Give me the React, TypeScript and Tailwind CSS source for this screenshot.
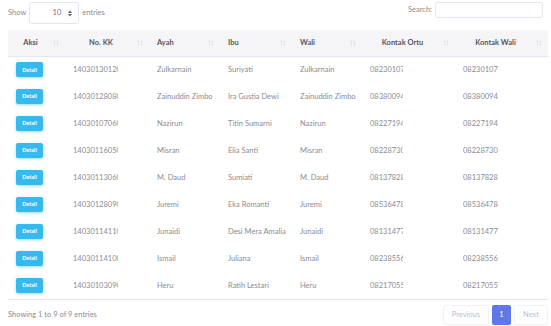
import React from "react";

const rows = [
  ["14030130120045", "Zulkarnain", "Suriyati", "Zulkarnain", "082301071234", "082301071234"],
  ["14030128080012", "Zainuddin Zimbo", "Ira Gustia Dewi", "Zainuddin Zimbo", "083800945512", "083800945512"],
  ["14030107060033", "Nazirun", "Titin Sumarni", "Nazirun", "082271943321", "082271943321"],
  ["14030116050021", "Misran", "Elia Santi", "Misran", "082287306654", "082287306654"],
  ["14030113060018", "M. Daud", "Sumiati", "M. Daud", "081378281123", "081378281123"],
  ["14030128090027", "Juremi", "Eka Romanti", "Juremi", "085364788876", "085364788876"],
  ["14030114110009", "Junaidi", "Desi Mera Amalia", "Junaidi", "081314772231", "081314772231"],
  ["14030114100014", "Ismail", "Juliana", "Ismail", "082385565544", "082385565544"],
  ["14030103090031", "Heru", "Ratih Lestari", "Heru", "082170557789", "082170557789"],
];

const headers: { label: string; center: boolean }[] = [
  { label: "Aksi", center: true },
  { label: "No. KK", center: true },
  { label: "Ayah", center: false },
  { label: "Ibu", center: false },
  { label: "Wali", center: false },
  { label: "Kontak Ortu", center: true },
  { label: "Kontak Wali", center: true },
];

function SortIcon() {
  return (
    <svg width="6" height="6" viewBox="0 0 6 6" className="absolute right-[6px] top-1/2 -translate-y-1/2">
      <path d="M1.5 5.5V0.8M0.5 1.8L1.5 0.8L2.5 1.8" stroke="#d5d7e0" strokeWidth="0.6" fill="none" />
      <path d="M4.5 0.5V5.2M3.5 4.2L4.5 5.2L5.5 4.2" stroke="#d5d7e0" strokeWidth="0.6" fill="none" />
    </svg>
  );
}

export default function App() {
  return (
    <div
      className="w-[551px] h-[326px] bg-white text-[#8a8b93] text-[7.5px] overflow-hidden"
      style={{ fontFamily: "Lato, 'Open Sans', sans-serif" }}
    >
      <div className="flex items-start justify-between px-[8px] pt-[2px] h-[30px]">
        <div className="flex items-center gap-[3px] h-[22px]">
          <span>Show</span>
          <div className="w-[50px] h-[22px] border border-[#e3e6f0] rounded-[3px] flex items-center justify-end pr-[6px] gap-[7px] text-[#6e707e]">
            <span>10</span>
            <svg width="4" height="7" viewBox="0 0 4 7">
              <path d="M0 3L2 0.5L4 3Z M0 4L2 6.5L4 4Z" fill="#5a5c69" />
            </svg>
          </div>
          <span>entries</span>
        </div>
        <div className="flex items-center gap-[3px] h-[16px]">
          <span>Search:</span>
          <div className="w-[108px] h-[16px] border border-[#e3e6f0] rounded-[3px]" />
        </div>
      </div>
      <div className="px-[8px]">
        <table className="table-fixed w-[540px] border-collapse">
          <colgroup>
            <col className="w-[57px]" />
            <col className="w-[84px]" />
            <col className="w-[71px]" />
            <col className="w-[72px]" />
            <col className="w-[70px]" />
            <col className="w-[93px]" />
            <col className="w-[93px]" />
          </colgroup>
          <thead>
            <tr className="bg-[#f5f5f7] h-[26px] border-b border-[#e3e6f0]">
              {headers.map((h) => (
                <th
                  key={h.label}
                  className={`relative font-bold text-[#55565f] pl-[8px] pr-[20px] ${h.center ? "text-center" : "text-left"}`}
                >
                  {h.label}
                  <SortIcon />
                </th>
              ))}
            </tr>
          </thead>
          <tbody>
            {rows.map((r, i) => (
              <tr key={i} className={`h-[27px] ${i === rows.length - 1 ? "border-b border-[#e3e6f0]" : ""}`}>
                <td className="pl-[8px]">
                  <span className="inline-flex items-center justify-center w-[27px] h-[15px] rounded-[2px] bg-[#36b9ee] text-white text-[5.5px] font-bold shadow-[0_1px_3px_rgba(54,185,238,0.5)]">
                    Detail
                  </span>
                </td>
                <td className="pl-[8px] align-middle">
                  <div className="w-[45px] overflow-hidden whitespace-nowrap">{r[0]}</div>
                </td>
                <td className="pl-[8px] whitespace-nowrap">{r[1]}</td>
                <td className="pl-[8px] whitespace-nowrap">{r[2]}</td>
                <td className="pl-[8px] whitespace-nowrap">{r[3]}</td>
                <td className="pl-[8px]">
                  <div className="w-[33px] overflow-hidden whitespace-nowrap">{r[4]}</div>
                </td>
                <td className="pl-[8px]">
                  <div className="w-[35px] overflow-hidden whitespace-nowrap">{r[5]}</div>
                </td>
              </tr>
            ))}
          </tbody>
        </table>
      </div>
      <div className="flex items-center justify-between pl-[8px] pr-[3px] mt-[5px]">
        <span>Showing 1 to 9 of 9 entries</span>
        <div className="flex items-center h-[20px]">
          <div className="h-[20px] px-[8px] flex items-center text-[#b7bde0] border border-[#f1f2f7] rounded-l-[3px]">Previous</div>
          <div className="h-[20px] w-[19px] mx-[3px] flex items-center justify-center bg-[#5f78e6] text-white rounded-[2px]">1</div>
          <div className="h-[20px] px-[8px] flex items-center text-[#b7bde0] border border-[#f1f2f7] rounded-r-[3px]">Next</div>
        </div>
      </div>
    </div>
  );
}
